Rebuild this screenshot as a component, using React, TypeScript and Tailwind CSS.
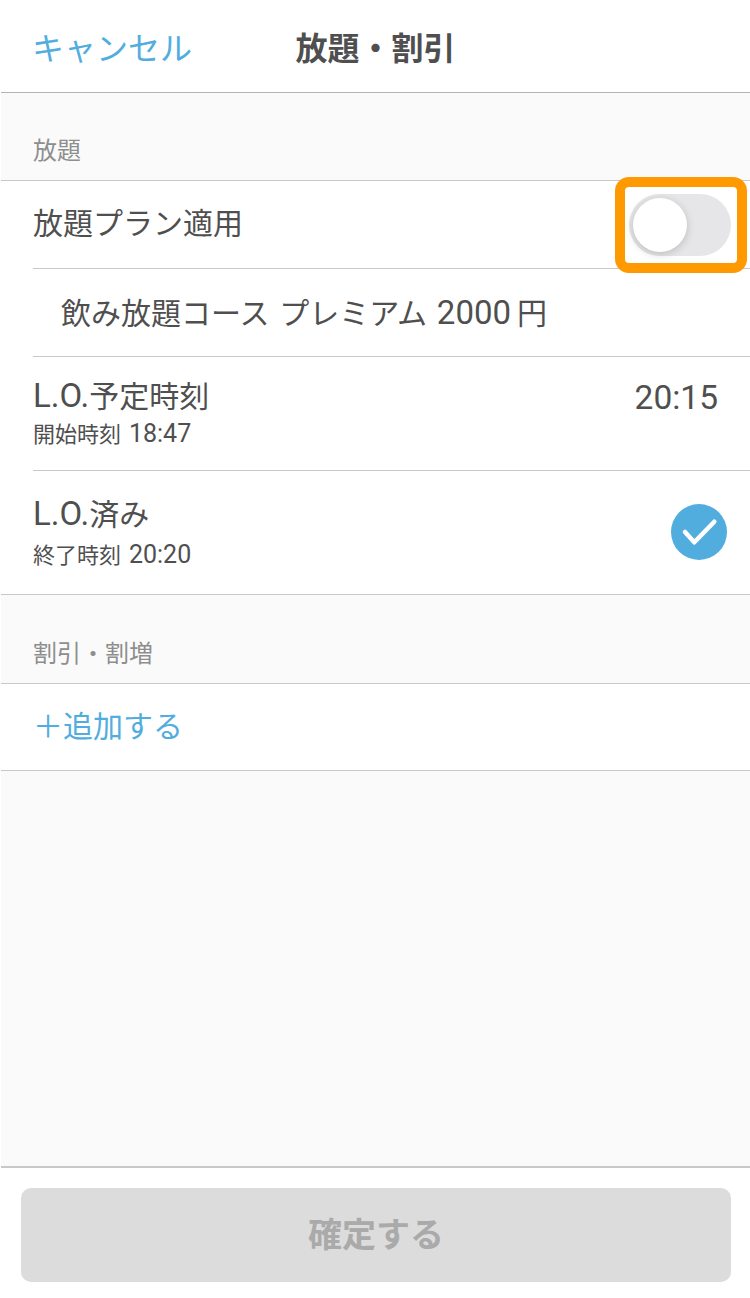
import React from 'react';

const Latin: React.FC<{ size: 'lg' | 'sm'; children: React.ReactNode }> = ({ size, children }) => (
  <span className={size === 'lg' ? "font-['Roboto'] text-[33px]" : "font-['Roboto'] text-[25px]"}>{children}</span>
);

const App: React.FC = () => {
  return (
    <div className="relative w-[750px] h-[1298px] overflow-hidden bg-white pl-px text-[#4f4f4f] font-['Noto_Sans_CJK_JP',sans-serif]">
      <header className="relative h-[93px] border-b border-[#b4b4b4] flex items-center justify-center">
        <span className="absolute left-[31px] top-[25px] text-[32px] leading-[42px] text-[#52addf]">キャンセル</span>
        <h1 className="text-[32px] leading-[42px] font-bold">放題・割引</h1>
      </header>

      <div className="h-[88px] bg-[#fafafa] border-b border-[#c8c8c8] flex items-end pl-[32px] pb-[15px]">
        <span className="text-[24px] leading-[32px] text-[#8e8e8e]">放題</span>
      </div>

      <div className="pl-[32px]">
        <div className="h-[88px] border-b border-[#c8c8c8] flex items-center justify-between pr-[19px]">
          <span className="text-[30px] leading-[38px] -mt-[7px]">放題プラン適用</span>
          <div className="relative w-[102px] h-[62px] rounded-full bg-[#e6e6e8]">
            <div className="absolute left-[4px] top-[4px] w-[54px] h-[54px] rounded-full bg-white shadow-[0_2px_8px_rgba(0,0,0,0.18)]" />
          </div>
        </div>
        <div className="h-[88px] border-b border-[#c8c8c8] flex items-center pl-[28px]">
          <span className="text-[30px] leading-[38px] -mt-[2px] [word-spacing:3px]">飲み放題コース プレミアム <Latin size="lg">2000</Latin><span className="ml-[6px]">円</span></span>
        </div>
        <div className="h-[114px] border-b border-[#c8c8c8] flex items-start justify-between pr-[32px] pt-[18px]">
          <div>
            <div className="text-[30px] leading-[38px]"><Latin size="lg">L.O.</Latin>予定時刻</div>
            <div className="text-[22px] leading-[30px] mt-[2px] [word-spacing:3px]">開始時刻 <Latin size="sm">18:47</Latin></div>
          </div>
          <span className="font-['Roboto'] text-[33.5px] leading-[38px] mt-[4px]">20:15</span>
        </div>
        <div className="h-[123px] flex items-start justify-between pr-[23px] pt-[22px]">
          <div>
            <div className="text-[30px] leading-[38px]"><Latin size="lg">L.O.</Latin>済み</div>
            <div className="text-[22px] leading-[30px] mt-[5px] [word-spacing:3px]">終了時刻 <Latin size="sm">20:20</Latin></div>
          </div>
          <svg className="mt-[11px]" width="56" height="56" viewBox="0 0 56 56" fill="none">
            <circle cx="28" cy="28" r="28" fill="#52addf" />
            <path d="M14 28 L23.3 38.3 L43.3 17.7" stroke="#fff" strokeWidth="4.5" strokeLinecap="round" strokeLinejoin="round" />
          </svg>
        </div>
      </div>

      <div className="h-[90px] bg-[#fafafa] border-y border-[#c8c8c8] flex items-end pl-[32px] pb-[15px]">
        <span className="text-[24px] leading-[32px] text-[#8e8e8e]">割引・割増</span>
      </div>

      <div className="h-[87px] border-b border-[#c8c8c8] flex items-center pl-[32px]">
        <span className="text-[30px] leading-[38px] text-[#52addf] -mt-[7px]">＋追加する</span>
      </div>

      <div className="h-[397px] bg-[#fafafa] border-b-2 border-[#c8c8c8]" />

      <div className="pt-[20px] pl-[20px]">
        <button className="w-[710px] h-[94px] rounded-[10px] bg-[#dcdcdc] text-[34px] leading-[46px] pb-[4px] font-bold text-[#aaaaaa]">確定する</button>
      </div>

      <div className="absolute left-[615px] top-[177px] w-[132px] h-[96px] border-[10px] border-[#ff9900] rounded-[14px]" />
    </div>
  );
};

export default App;
